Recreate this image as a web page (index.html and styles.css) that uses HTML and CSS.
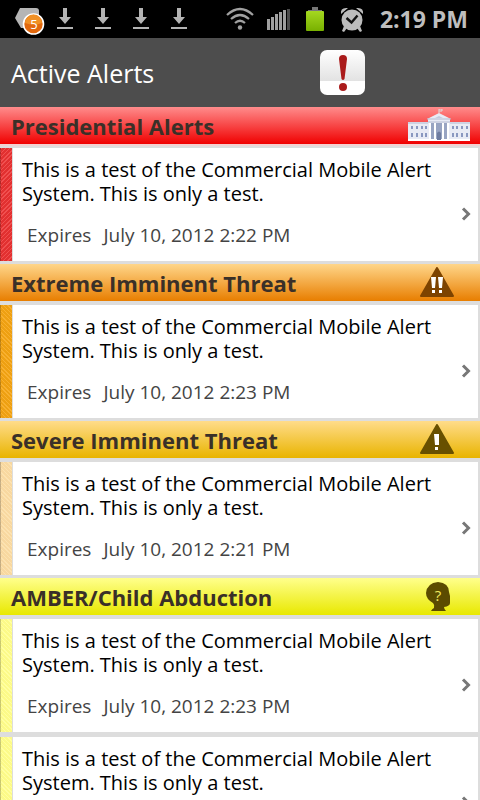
FILE: index.html
```
<!DOCTYPE html>
<html lang="en">
<head>
    <meta charset="UTF-8">
    <meta name="viewport" content="width=device-width, initial-scale=1.0">
    <title>Active Alerts</title>
    <link rel="stylesheet" href="styles.css">
</head>
<body>
    <!-- Shared icons -->
    <svg class="defs" width="0" height="0">
        <symbol id="download" viewBox="0 0 16 22">
            <path d="M6 0h4v9h4l-6 7-6-7h4zM0 19h16v2H0z" fill="#b4b4b4"/>
        </symbol>
        <symbol id="chevron" viewBox="0 0 10 14">
            <path d="M2 1.5L7.5 7 2 12.5" fill="none" stroke="#777" stroke-width="3"/>
        </symbol>
    </svg>

    <!-- Status bar -->
    <div class="status-bar">
        <div class="notifications">
            <svg class="badge-icon" width="32" height="30" viewBox="0 0 32 30">
                <path d="M6 1h16q3 0 3 3v17H7L1 11z" fill="#b5b5b5"/>
                <circle cx="19.500" cy="17" r="10" fill="#e2680d" stroke="#fff" stroke-width="1.600"/>
                <path d="M11 16a8.500 8.500 0 0 1 17 0q-8 3-17 0z" fill="#f09025"/>
                <text x="20" y="22" text-anchor="middle">5</text>
            </svg>
            <svg width="16" height="22"><use href="#download"/></svg>
            <svg width="16" height="22"><use href="#download"/></svg>
            <svg width="16" height="22"><use href="#download"/></svg>
            <svg width="16" height="22"><use href="#download"/></svg>
        </div>
        <div class="system">
            <svg class="wifi" width="28" height="24" viewBox="0 0 28 24">
                <g fill="none" stroke="#a0a0a0" stroke-width="2.200">
                    <path d="M1 8q13-12 26 0M5 12q9-8 18 0M9 16q5-4.500 10 0"/>
                </g>
                <circle cx="14" cy="20.500" r="2.200" fill="#a0a0a0"/>
            </svg>
            <svg width="24" height="24" viewBox="0 0 24 24">
                <path d="M1 12h3v11H1zM5 10h3v13H5zM9 7h3v16H9zM13 5h3v18h-3zM17 3h3v20h-3z" fill="#a0a0a0"/>
                <path d="M21 2h3v21h-3z" fill="#4d4d4d"/>
            </svg>
            <svg width="18" height="26" viewBox="0 0 18 26">
                <defs>
                    <linearGradient id="battery" x2="0" y2="1">
                        <stop offset="0" stop-color="#a5d820"/>
                        <stop offset="1" stop-color="#78b000"/>
                    </linearGradient>
                </defs>
                <path d="M6 1h6v3h4v2H2V4h4z" fill="#777"/>
                <rect y="5" width="18" height="20" rx="1" fill="url(#battery)"/>
            </svg>
            <svg width="24" height="26" viewBox="0 0 24 26">
                <g fill="#bcbcbc">
                    <path d="M1 8Q0 1 8 2zM23 8q1-7-7-6zM4 20l3 2-3 4-2-1zM20 20l-3 2 3 4 2-1z"/>
                    <circle cx="12" cy="14" r="10.500"/>
                </g>
                <path d="M6.500 12l5 4.500 6-7" fill="none" stroke="#111" stroke-width="2.400"/>
            </svg>
            <span class="clock">2:19 PM</span>
        </div>
    </div>

    <!-- Title bar -->
    <header class="title-bar">
        <h1>Active Alerts</h1>
        <button type="button" class="alert-button" aria-label="Alerts">
            <svg width="45" height="45" viewBox="0 0 45 45">
                <path d="M19 9q0-4 4-4t4 4l-2.500 20q-1.500 2-3 0z" fill="#aa1b1b"/>
                <circle cx="23" cy="37" r="4" fill="#aa1b1b"/>
            </svg>
        </button>
    </header>

    <!-- Alert list -->
    <main class="alert-list">
        <section class="presidential">
            <h2>
                Presidential Alerts
                <svg class="house" width="62" height="33" viewBox="0 0 62 33">
                    <path d="M0 13h20v-3h-1l12-6 12 6h-1v3h20v19H0z" fill="#e8ebf5"/>
                    <path d="M31 4V0h3v2h-2.500" fill="none" stroke="#ddd"/>
                    <path d="M0 14h20M42 14h20M19 10h24M20 13h22" stroke="#b4bad0"/>
                    <path d="M0 31h62" stroke="#fff" stroke-width="2"/>
                    <path d="M22 14h18v16H22z" fill="#98a4c2"/>
                    <path d="M22 14v17M27 14v17M35 14v17M40 14v17" stroke="#fff" stroke-width="2"/>
                    <path d="M29 31v-7q2-3 4 0v7z" fill="#6f7da0"/>
                    <path d="M4 17v3M9 17v3M14 17v3M18 17v3M45 17v3M49 17v3M54 17v3M59 17v3M4 24v4M9 24v4M14 24v4M18 24v4M45 24v4M49 24v4M54 24v4M59 24v4" stroke="#8a98c0" stroke-width="2"/>
                    <path d="M27 9l4-2 4 2z" fill="#c4cbdd"/>
                </svg>
            </h2>
            <a class="alert" href="#alert-1">
                <span class="body">
                    <span class="text">
                        <span class="message">This is a test of the Commercial Mobile Alert System. This is only a test.</span>
                        <span class="expires"><span>Expires</span><span>July 10, 2012 2:22 PM</span></span>
                    </span>
                    <svg class="arrow" width="10" height="14"><use href="#chevron"/></svg>
                </span>
            </a>
        </section>

        <section class="extreme">
            <h2>
                Extreme Imminent Threat
                <svg width="36" height="32" viewBox="0 0 36 32">
                    <path d="M18 1L34 29H2z" fill="#7d4300" stroke="#7d4300" stroke-width="2" stroke-linejoin="round"/>
                    <path d="M12 10h5l-1 11h-3zM19 10h5l-1 11h-3zM13 23h3v3h-3zM20 23h3v3h-3z" fill="#fff"/>
                </svg>
            </h2>
            <a class="alert" href="#alert-2">
                <span class="body">
                    <span class="text">
                        <span class="message">This is a test of the Commercial Mobile Alert System. This is only a test.</span>
                        <span class="expires"><span>Expires</span><span>July 10, 2012 2:23 PM</span></span>
                    </span>
                    <svg class="arrow" width="10" height="14"><use href="#chevron"/></svg>
                </span>
            </a>
        </section>

        <section class="severe">
            <h2>
                Severe Imminent Threat
                <svg width="36" height="32" viewBox="0 0 36 32">
                    <path d="M18 1L34 29H2z" fill="#685000" stroke="#685000" stroke-width="2" stroke-linejoin="round"/>
                    <path d="M15 10h5v11h-4zM16 23h3v3h-3z" fill="#fff"/>
                </svg>
            </h2>
            <a class="alert" href="#alert-3">
                <span class="body">
                    <span class="text">
                        <span class="message">This is a test of the Commercial Mobile Alert System. This is only a test.</span>
                        <span class="expires"><span>Expires</span><span>July 10, 2012 2:21 PM</span></span>
                    </span>
                    <svg class="arrow" width="10" height="14"><use href="#chevron"/></svg>
                </span>
            </a>
        </section>

        <section class="amber">
            <h2>
                AMBER/Child Abduction
                <svg class="child" width="36" height="32" viewBox="0 0 36 32">
                    <path d="M12 30q1-2 3-3 1-3-1-5Q7 18 7 12 8 2 19 1q11 1 11 10l1 4v7q0 3-6 4 0 2 2 4z" fill="#5b4b00"/>
                    <text x="19" y="20" text-anchor="middle">?</text>
                </svg>
            </h2>
            <a class="alert" href="#alert-4">
                <span class="body">
                    <span class="text">
                        <span class="message">This is a test of the Commercial Mobile Alert System. This is only a test.</span>
                        <span class="expires"><span>Expires</span><span>July 10, 2012 2:23 PM</span></span>
                    </span>
                    <svg class="arrow" width="10" height="14"><use href="#chevron"/></svg>
                </span>
            </a>
            <a class="alert" href="#alert-5">
                <span class="body">
                    <span class="text">
                        <span class="message">This is a test of the Commercial Mobile Alert System. This is only a test.</span>
                    </span>
                    <svg class="arrow" width="10" height="14"><use href="#chevron"/></svg>
                </span>
            </a>
        </section>
    </main>
</body>
</html>
```
FILE: styles.css
```
* {
    box-sizing: border-box;
}
body {
    margin: 0;
    height: 100vh;
    display: flex;
    flex-direction: column;
    overflow: hidden;
    background-color: #ddd;
    font-family: "Open Sans", "Noto Sans", sans-serif;
}
svg {
    display: block;
    flex: none;
}
.defs {
    position: absolute;
}

/* Status bar */
.status-bar {
    flex: none;
    height: 38px;
    display: flex;
    justify-content: space-between;
    align-items: center;
    padding: 0 12px 0 14px;
    background-color: #000;
}
.notifications {
    display: flex;
    align-items: center;
    gap: 22px;
}
.badge-icon {
    margin-top: 6px;
    margin-right: -11px;
}
.badge-icon text {
    font-size: 13px;
    fill: #fff;
}
.system {
    display: flex;
    align-items: center;
    gap: 16px;
}
.wifi {
    margin-right: -4px;
}
.clock {
    font-size: 23px;
    line-height: 38px;
    font-weight: bold;
    color: #bebebe;
}

/* Title bar */
.title-bar {
    flex: none;
    height: 69px;
    display: flex;
    justify-content: space-between;
    align-items: center;
    padding: 0 115px 0 11px;
    background-color: #4d4d4d;
}
h1 {
    margin: 0;
    font-size: 25px;
    font-weight: normal;
    color: #fff;
}
.alert-button {
    padding: 0;
    border: none;
    border-radius: 7px;
    background: linear-gradient(#fff, #e2e2e2 70%, #fff 70%);
    cursor: pointer;
}

/* Alert list */
.alert-list {
    flex: 1;
    min-height: 0;
    overflow: hidden;
}
h2 {
    margin: 0;
    height: 39px;
    display: flex;
    justify-content: space-between;
    align-items: center;
    padding: 0 25px 0 11px;
    border-bottom: 2px solid #ddd;
    font-size: 22px;
    line-height: 36px;
    color: #3a3028;
}
h2 .house {
    margin-right: -15px;
}
.child text {
    font-size: 15px;
    font-weight: normal;
    fill: #f0e860;
}
.alert {
    height: 118px;
    display: flex;
    padding: 2px 2px 3px 0;
    background-color: #ddd;
    text-decoration: none;
}
.alert::before {
    content: "";
    width: 11px;
    flex: none;
    border-right: 1px solid #ddd;
    border-left: 1px solid rgba(0, 0, 0, 0.2);
}
.body {
    flex: 1;
    display: flex;
    align-items: flex-start;
    padding: 10px 7px 0 9px;
    background-color: #fff;
}
.text {
    flex: 1;
}
.message {
    display: block;
    font-size: 20px;
    line-height: 24px;
    color: #000;
}
.expires {
    display: flex;
    gap: 12px;
    padding: 17px 5px 0;
    font-size: 19px;
    line-height: 24px;
    color: #444;
}
.arrow {
    margin-top: 49px;
}

/* Severity colours */
.presidential h2 {
    background: linear-gradient(#ff8c8c, #f00000) padding-box;
    border-color: #f3d0d0;
}
.presidential .alert::before {
    background: repeating-linear-gradient(135deg, #f05050 0 1px, #e23030 1px 3px);
}
.extreme h2 {
    background: linear-gradient(#ffd68a, #e87e00) padding-box;
}
.extreme .alert::before {
    background: repeating-linear-gradient(45deg, #f8b030 0 1px, #eea012 1px 3px);
}
.severe h2 {
    background: linear-gradient(#ffdc8a, #e9b400) padding-box;
}
.severe .alert::before {
    background: repeating-linear-gradient(45deg, #fce2b0 0 1px, #f8d8a0 1px 3px);
}
.amber h2 {
    background: linear-gradient(#ffff8c, #e8e800) padding-box;
}
.amber .alert::before {
    background: repeating-linear-gradient(45deg, #ffffa0 0 1px, #fcfa88 1px 3px);
}
```
